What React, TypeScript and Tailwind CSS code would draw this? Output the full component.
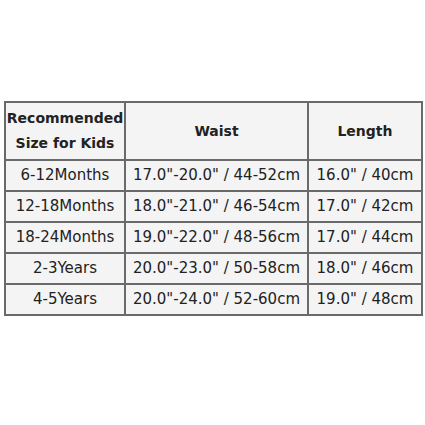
import React from "react";

const rows = [
  ["6-12Months", "17.0\"-20.0\" / 44-52cm", "16.0\" / 40cm"],
  ["12-18Months", "18.0\"-21.0\" / 46-54cm", "17.0\" / 42cm"],
  ["18-24Months", "19.0\"-22.0\" / 48-56cm", "17.0\" / 44cm"],
  ["2-3Years", "20.0\"-23.0\" / 50-58cm", "18.0\" / 46cm"],
  ["4-5Years", "20.0\"-24.0\" / 52-60cm", "19.0\" / 48cm"],
];

export default function App() {
  return (
    <div className="w-[425px] h-[425px] bg-white pt-[101px] pl-[4px]" style={{ fontFamily: '"DejaVu Sans", Verdana, sans-serif' }}>
      <table className="table-fixed w-[417px] border-collapse bg-[#f4f4f4] text-[#222] text-[15px]">
        <colgroup>
          <col className="w-[120px]" />
          <col className="w-[183px]" />
          <col className="w-[114px]" />
        </colgroup>
        <tbody>
          <tr className="h-[58px]">
            <th className="border-2 border-[#6a6a6a] font-bold text-[14px] leading-[25px] text-center px-0 whitespace-nowrap">
              Recommended
              <br />
              Size for Kids
            </th>
            <th className="border-2 border-[#6a6a6a] font-bold text-[14px] text-center">Waist</th>
            <th className="border-2 border-[#6a6a6a] font-bold text-[14px] text-center">Length</th>
          </tr>
          {rows.map((r) => (
            <tr key={r[0]} className="h-[31px]">
              {r.map((c, i) => (
                <td key={i} className="border-2 border-[#6a6a6a] text-center p-0 whitespace-nowrap">
                  {c}
                </td>
              ))}
            </tr>
          ))}
        </tbody>
      </table>
    </div>
  );
}
